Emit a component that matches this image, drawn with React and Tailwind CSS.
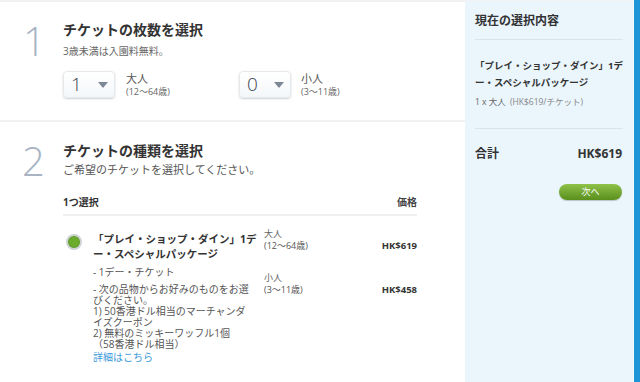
import React from "react";

const font = { fontFamily: '"Open Sans", "Noto Sans CJK JP", sans-serif' };

function Select({ value }) {
  return (
    <div className="flex h-[27px] w-[52px] items-center justify-between rounded-[4px] border border-[#e6e9ec] bg-gradient-to-b from-white to-[#f4f7fa] pl-[7px] pr-[6px] shadow-[0_1px_2px_rgba(0,0,0,0.18)]">
      <span className="text-[19px] leading-none text-[#3a4450] font-light">{value}</span>
      <svg width="10" height="6" viewBox="0 0 10 6"><path d="M0 0h10L5 6z" fill="#7d8896" /></svg>
    </div>
  );
}

export default function App() {
  return (
    <div className="flex h-[382px] w-[640px] overflow-hidden bg-white text-[#333]" style={font}>
      <div className="flex w-[465px] flex-col">
        <div className="h-[2px] bg-[#f1f1f1]" />
        {/* section 1 */}
        <div className="flex h-[118px]">
          <div className="w-[63px] pl-[23px] pt-[19px] text-[40px] font-light leading-none text-[#a8b4c3]">1</div>
          <div className="flex flex-col pt-[19px]">
            <div className="text-[14px] font-bold leading-[18px] text-[#333]">チケットの枚数を選択</div>
            <div className="mt-[6px] text-[10px] leading-[12px] text-[#666]">3歳未満は入園料無料。</div>
            <div className="mt-[14px] flex">
              <div className="flex w-[176px]">
                <Select value="1" />
                <div className="ml-[11px] flex flex-col">
                  <span className="text-[11px] leading-[15px] text-[#555]">大人</span>
                  <span className="text-[9px] leading-[12px] text-[#666]">(12〜64歳)</span>
                </div>
              </div>
              <div className="flex">
                <Select value="0" />
                <div className="ml-[10px] flex flex-col">
                  <span className="text-[11px] leading-[15px] text-[#555]">小人</span>
                  <span className="text-[9px] leading-[12px] text-[#666]">(3〜11歳)</span>
                </div>
              </div>
            </div>
          </div>
        </div>
        <div className="h-[2px] bg-[#f1f1f1]" />
        {/* section 2 */}
        <div className="flex flex-1">
          <div className="w-[63px] pl-[22px] pt-[19px] text-[40px] font-light leading-none text-[#a8b4c3]">2</div>
          <div className="flex w-[354px] flex-col pt-[20px]">
            <div className="text-[14px] font-bold leading-[18px] text-[#333]">チケットの種類を選択</div>
            <div className="mt-[3px] text-[11px] leading-[14px] text-[#555]">ご希望のチケットを選択してください。</div>
            <div className="mt-[18px] flex items-end justify-between border-b-2 border-[#efefef] pb-[5px]">
              <span className="text-[10px] font-bold leading-[14px] text-[#333]">1つ選択</span>
              <span className="text-[10px] font-bold leading-[14px] text-[#444]">価格</span>
            </div>
            <div className="mt-[16px] flex">
              <div className="ml-[3px] mt-[2px] h-[16px] w-[16px] rounded-full border-2 border-[#cfd3d6] bg-[#6cac2c] shadow-[inset_0_0_0_1px_#5e9a24]" />
              <div className="ml-[11px] w-[168px]">
                <div className="text-[10.5px] font-bold leading-[15px] text-[#333]">「プレイ・ショップ・ダイン」1デー・スペシャルパッケージ</div>
                <div className="mt-[4px] text-[10px] leading-[12px] text-[#555]">- 1デー・チケット</div>
                <div className="mt-[6px] w-[160px] text-[10px] leading-[11px] text-[#555]">
                  - 次の品物からお好みのものをお選びください。<br />
                  1) 50香港ドル相当のマーチャンダイズクーポン<br />
                  2) 無料のミッキーワッフル1個<br />
                  （58香港ドル相当）
                </div>
                <div className="mt-[1px] text-[10px] leading-[12px] text-[#3b9ad9]">詳細はこちら</div>
              </div>
              <div className="-mt-[4px] ml-[3px] flex flex-1 flex-col">
                <div className="flex items-end justify-between">
                  <div className="flex flex-col">
                    <span className="text-[9px] leading-[12px] text-[#666]">大人</span>
                    <span className="text-[9px] leading-[12px] text-[#555]">(12〜64歳)</span>
                  </div>
                  <span className="text-[9.5px] font-bold leading-[12px] text-[#333]">HK$619</span>
                </div>
                <div className="mt-[20px] flex items-end justify-between">
                  <div className="flex flex-col">
                    <span className="text-[9px] leading-[12px] text-[#666]">小人</span>
                    <span className="text-[9px] leading-[12px] text-[#555]">(3〜11歳)</span>
                  </div>
                  <span className="text-[9.5px] font-bold leading-[12px] text-[#333]">HK$458</span>
                </div>
              </div>
            </div>
          </div>
        </div>
      </div>
      {/* sidebar */}
      <div className="flex w-[168px] flex-col border-t border-[#f0f2f4] bg-[#eaf5fc] px-[10px]">
        <div className="pt-[12px] text-[12px] font-bold leading-[16px] text-[#333]">現在の選択内容</div>
        <div className="mt-[10px] h-px bg-[#d8e3ea]" />
        <div className="mt-[17px] text-[9.5px] font-bold leading-[17px] text-[#333]">「プレイ・ショップ・ダイン」1デー・スペシャルパッケージ</div>
        <div className="mt-[5px] text-[8.5px] leading-[12px] text-[#666]">1 x 大人 <span className="ml-[2px] text-[#888]">(HK$619/チケット)</span></div>
        <div className="mt-[20px] h-px bg-[#d8e3ea]" />
        <div className="mt-[17px] flex justify-between pr-[1px]">
          <span className="text-[12px] font-bold leading-[16px] text-[#333]">合計</span>
          <span className="text-[12px] font-bold leading-[16px] text-[#333]">HK$619</span>
        </div>
        <div className="mt-[22px] flex justify-end pr-[1px]">
          <div className="flex h-[16px] w-[63px] items-center justify-center rounded-full bg-gradient-to-b from-[#8fc248] to-[#5a8f1c] text-[9px] text-white shadow-[0_1px_1px_rgba(0,0,0,0.2)]">次へ</div>
        </div>
      </div>
      <div className="w-px bg-[#f4f9fc]" />
      <div className="w-[6px] bg-[#1d95d9]" />
    </div>
  );
}
